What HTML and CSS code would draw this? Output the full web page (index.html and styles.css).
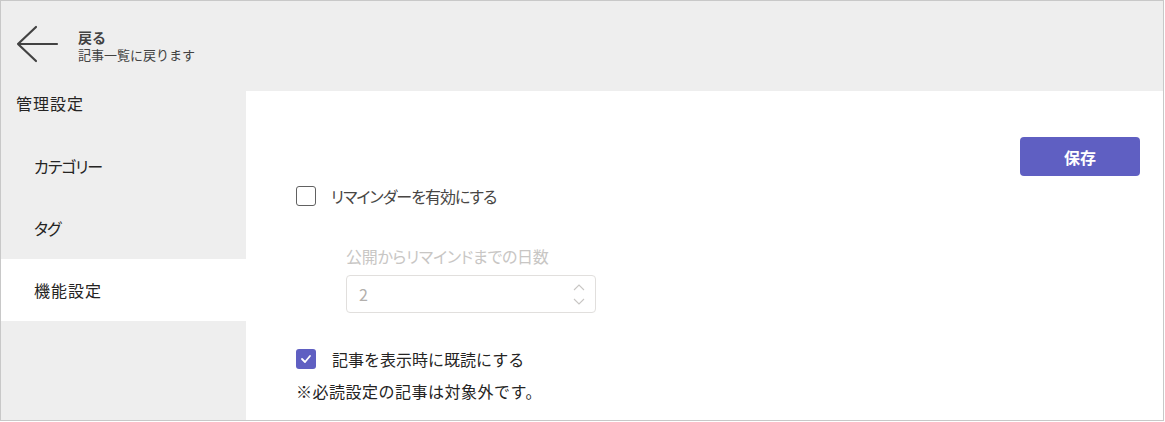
FILE: index.html
```html
<!DOCTYPE html>
<html lang="ja">
<head>
  <meta charset="UTF-8" />
  <title>機能設定</title>
  <link rel="stylesheet" href="styles.css">
</head>
<body>
  <div class="frame">
    <!-- Back header -->
    <header class="back">
      <svg class="back-icon" width="44" height="40" viewBox="0 0 44 40">
        <path d="M41 20 H2 M20 3 L2 20 L20 37" fill="none" stroke="#424242" stroke-width="2.2" stroke-linecap="round" stroke-linejoin="round" />
      </svg>
      <div class="back-text">
        <div class="back-title">戻る</div>
        <div class="back-sub">記事一覧に戻ります</div>
      </div>
    </header>

    <div class="body">
      <!-- Sidebar -->
      <aside class="sidebar">
        <div class="side-heading">管理設定</div>
        <div class="side-item">カテゴリー</div>
        <div class="side-item">タグ</div>
        <div class="side-item active">機能設定</div>
      </aside>

      <!-- Settings -->
      <main class="content">
        <div class="actions">
          <button class="save">保存</button>
        </div>

        <label class="check-row">
          <span class="box"></span>
          <span class="check-label">リマインダーを有効にする</span>
        </label>

        <div class="field disabled">
          <div class="field-label">公開からリマインドまでの日数</div>
          <div class="number-input">
            <span class="value">2</span>
            <span class="spin">
              <svg width="12" height="8" viewBox="0 0 12 8"><path d="M1 7 L6 2 L11 7" fill="none" stroke="#c8c6c4" stroke-width="1.1" /></svg>
              <svg width="12" height="8" viewBox="0 0 12 8"><path d="M1 1 L6 6 L11 1" fill="none" stroke="#c8c6c4" stroke-width="1.1" /></svg>
            </span>
          </div>
        </div>

        <label class="check-row checked-row">
          <span class="box checked">
            <svg width="12" height="10" viewBox="0 0 12 10"><path d="M2 5 L5 8 L10 2" fill="none" stroke="#fff" stroke-width="1.8" stroke-linecap="round" stroke-linejoin="round" /></svg>
          </span>
          <span class="check-label dark">記事を表示時に既読にする</span>
        </label>

        <p class="note">※必読設定の記事は対象外です。</p>
      </main>
    </div>
  </div>
</body>
</html>
```

FILE: styles.css
```css
* {
  margin: 0;
  padding: 0;
  box-sizing: border-box;
}
body {
  font-family: "Noto Sans CJK JP", "Noto Sans", sans-serif;
  color: #252423;
  background: #ffffff;
}
.frame {
  width: 1164px;
  height: 421px;
  border: 1px solid #c8c8c8;
  display: flex;
  flex-direction: column;
  overflow: hidden;
}

/* header */
.back {
  height: 90px;
  background: #eeeeee;
  display: flex;
  align-items: center;
  padding: 0 0 4px 15px;
}
.back-icon {
  margin-right: 18px;
}
.back-title {
  font-size: 14px;
  font-weight: 700;
  line-height: 18px;
  margin-top: 2px;
  color: #424242;
}
.back-sub {
  font-size: 13px;
  line-height: 17px;
  color: #424242;
}

/* columns */
.body {
  flex: 1;
  display: flex;
}
.sidebar {
  width: 245px;
  background: #eeeeee;
  font-size: 16px;
}
.side-heading {
  height: 44px;
  padding: 1px 0 0 15px;
  line-height: 22px;
  letter-spacing: 1px;
  color: #252423;
}
.side-item {
  height: 62px;
  display: flex;
  align-items: center;
  padding-left: 33px;
  font-feature-settings: "palt";
  letter-spacing: -1px;
}
.side-item.active {
  background: #ffffff;
  font-feature-settings: normal;
  letter-spacing: 1px;
}

/* main */
.content {
  flex: 1;
  padding: 46px 23px 0 50px;
  font-size: 16px;
}
.actions {
  display: flex;
  justify-content: flex-end;
}
.save {
  width: 120px;
  height: 39px;
  border: none;
  border-radius: 4px;
  background: #5f5fc2;
  color: #ffffff;
  font-family: inherit;
  font-size: 16px;
  font-weight: 700;
}
.check-row {
  display: flex;
  align-items: center;
  height: 20px;
  margin-top: 10px;
}
.box {
  width: 20px;
  height: 20px;
  border: 1.5px solid #616161;
  border-radius: 3px;
  margin-right: 15px;
  display: flex;
  align-items: center;
  justify-content: center;
}
.box.checked {
  border: none;
  background: #5f5fc2;
  margin-right: 16px;
}
.check-label {
  color: #484644;
  font-feature-settings: "palt";
  letter-spacing: -1px;
}
.check-label.dark {
  color: #252423;
  font-feature-settings: normal;
  letter-spacing: 0;
}
.field {
  margin: 39px 0 0 50px;
}
.field-label {
  line-height: 22px;
  color: #c8c6c4;
  font-feature-settings: "palt";
  letter-spacing: -0.3px;
}
.number-input {
  margin-top: 8px;
  width: 250px;
  height: 38px;
  border: 1px solid #e1dfdd;
  border-radius: 4px;
  display: flex;
  align-items: center;
  justify-content: space-between;
  padding: 0 10px 0 12px;
  color: #b3b0ad;
}
.spin {
  display: flex;
  flex-direction: column;
  gap: 7px;
}
.checked-row {
  margin-top: 36px;
}
.note {
  margin-top: 11px;
  line-height: 22px;
  letter-spacing: 0.5px;
  color: #252423;
}
```
